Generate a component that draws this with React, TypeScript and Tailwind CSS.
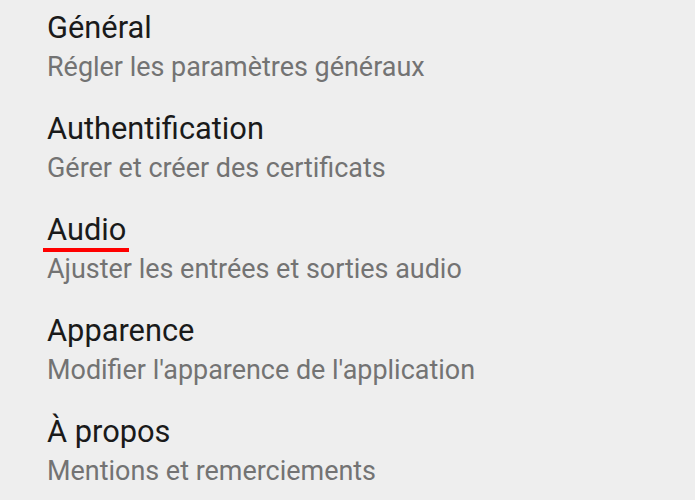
import React from "react";

const items = [
  { title: "Général", subtitle: "Régler les paramètres généraux" },
  { title: "Authentification", subtitle: "Gérer et créer des certificats" },
  { title: "Audio", subtitle: "Ajuster les entrées et sorties audio", active: true },
  { title: "Apparence", subtitle: "Modifier l'apparence de l'application" },
  { title: "À propos", subtitle: "Mentions et remerciements" },
];

export default function App() {
  return (
    <div
      className="w-[695px] h-[500px] overflow-hidden bg-[#eeeeee] pl-[47px] pt-[10px] flex flex-col gap-[22px]"
      style={{ fontFamily: "Roboto, 'Noto Sans', sans-serif" }}
    >
      {items.map((it) => (
        <div key={it.title} className="flex flex-col">
          <div className="h-[36px] leading-[36px] text-[30.8px] text-[#1a1a1a]">
            <span className="relative inline-block">
              {it.title}
              {it.active && (
                <span className="absolute left-[-4px] right-[-3px] bottom-[-4px] h-[4px] bg-[#ff0000]" />
              )}
            </span>
          </div>
          <div className="h-[43px] leading-[42px] text-[26.95px] text-[#737373]">{it.subtitle}</div>
        </div>
      ))}
    </div>
  );
}
